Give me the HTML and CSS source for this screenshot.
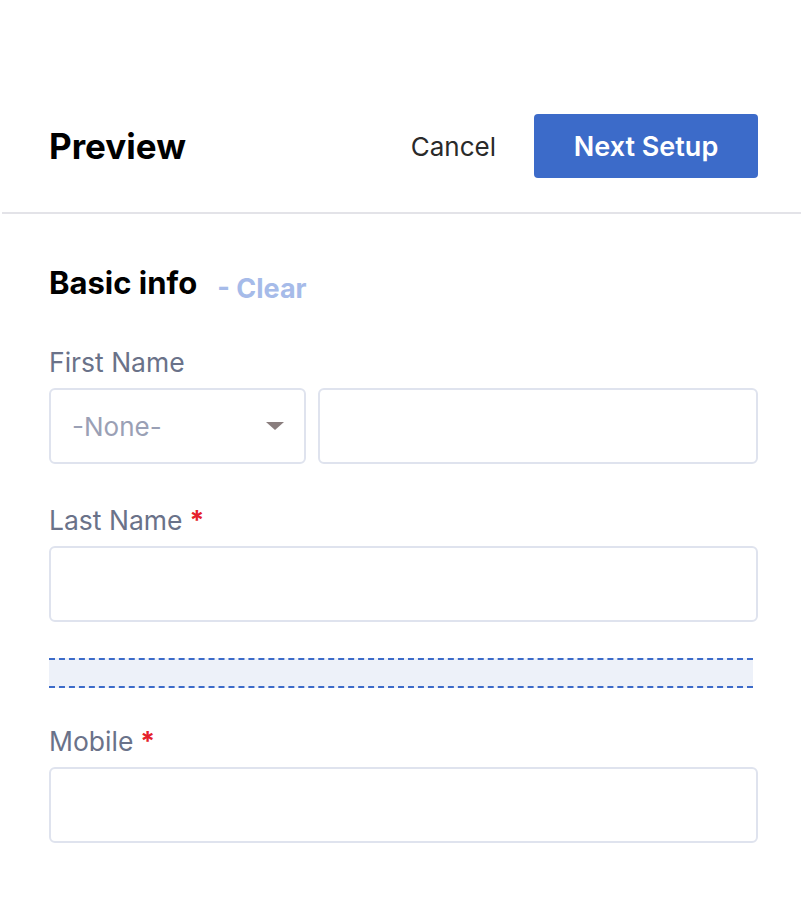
FILE: index.html
```html
<!DOCTYPE html>
<html lang="en">
<head>
  <meta charset="UTF-8" />
  <title>Preview</title>
  <link rel="stylesheet" href="styles.css">
</head>
<body>
  <div class="panel">
    <header class="topbar">
      <h1>Preview</h1>
      <div class="actions">
        <button class="btn-cancel">Cancel</button>
        <button class="btn-next">Next Setup</button>
      </div>
    </header>

    <section class="form">
      <div class="section-title">
        <h2>Basic info</h2>
        <a class="clear" href="#">- Clear</a>
      </div>

      <div class="field">
        <label>First Name</label>
        <div class="row">
          <div class="select">
            <span>-None-</span>
            <span class="caret"></span>
          </div>
          <div class="input grow"></div>
        </div>
      </div>

      <div class="field">
        <label>Last Name<span class="req">*</span></label>
        <div class="input"></div>
      </div>

      <div class="drop-zone"></div>

      <div class="field">
        <label>Mobile<span class="req">*</span></label>
        <div class="input"></div>
      </div>
    </section>
  </div>
</body>
</html>
```

FILE: styles.css
```css
* { margin: 0; padding: 0; box-sizing: border-box; }
body, html {
  height: 100%;
  font-family: Inter, 'Noto Sans', sans-serif;
  background: #fff;
  color: #000;
}
.panel {
  padding-top: 114px;
}
.topbar {
  display: flex;
  align-items: center;
  justify-content: space-between;
  padding: 0 43px 34px 47px;
  margin-left: 2px;
  border-bottom: 2px solid #e3e3e8;
}
.topbar h1 {
  font-size: 35px;
  font-weight: 700;
}
.actions {
  display: flex;
  align-items: center;
  gap: 38px;
}
button {
  font-family: inherit;
  border: none;
  background: none;
  cursor: pointer;
}
.btn-cancel {
  font-size: 26px;
  color: #2a2a2a;
}
.btn-next {
  width: 224px;
  height: 64px;
  background: #3c6bc9;
  color: #fff;
  font-size: 27px;
  font-weight: 600;
  border-radius: 4px;
}

.form {
  padding: 50px 43px 40px 49px;
}
.section-title {
  display: flex;
  align-items: baseline;
  gap: 20px;
  margin-bottom: 45px;
}
.section-title h2 {
  font-size: 31px;
  font-weight: 700;
}
.clear {
  font-size: 27px;
  font-weight: 700;
  color: #a6bbe9;
  text-decoration: none;
  position: relative;
  top: 4px;
}

.field {
  margin-bottom: 40px;
}
.field label {
  display: block;
  font-size: 26.5px;
  color: #6a7289;
  margin-bottom: 10px;
  line-height: 32px;
}
.req {
  color: #e5212b;
  font-weight: 700;
  margin-left: 7px;
}
.row {
  display: flex;
  gap: 12px;
}
.select,
.input {
  height: 76px;
  border: 2px solid #dfe3ee;
  border-radius: 6px;
  background: #fff;
}
.select {
  width: 257px;
  display: flex;
  align-items: center;
  justify-content: space-between;
  padding: 0 20px 0 21px;
  font-size: 26px;
  color: #9aa0b5;
}
.caret {
  width: 0;
  height: 0;
  border-left: 9px solid transparent;
  border-right: 9px solid transparent;
  border-top: 8px solid #8a7e7e;
}
.grow {
  flex: 1;
}
.drop-zone {
  height: 30px;
  margin: -4px 5px 37px 0;
  background: #edf1f9;
  border-top: 2px dashed #3c6bc9;
  border-bottom: 2px dashed #3c6bc9;
}
```
